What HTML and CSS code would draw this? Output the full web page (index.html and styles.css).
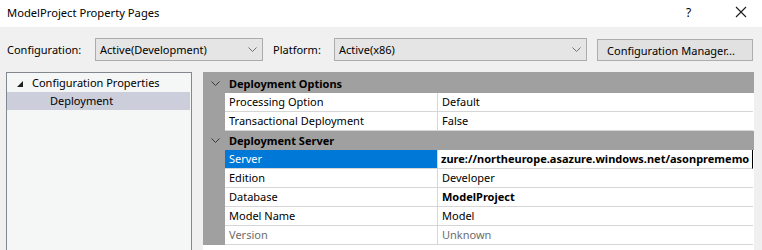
FILE: index.html
```html
<!DOCTYPE html>
<html lang="en">
<head>
    <meta charset="UTF-8">
    <title>ModelProject Property Pages</title>
    <link rel="stylesheet" href="styles.css">
</head>
<body>
    <div class="titlebar">
        <span class="title">ModelProject Property Pages</span>
        <span class="help">?</span>
        <svg class="close" width="12" height="12" viewBox="0 0 12 12">
            <path d="M1 1 L11 11 M11 1 L1 11" stroke="#1a1a1a" stroke-width="1.1" fill="none"/>
        </svg>
    </div>

    <div class="toolbar">
        <span class="label label-config">Configuration:</span>
        <div class="combo combo-config">
            <span>Active(Development)</span>
            <svg class="chev" width="9" height="5" viewBox="0 0 9 5"><path d="M0.5 0.5 L4.5 4.5 L8.5 0.5" stroke="#707070" fill="none"/></svg>
        </div>
        <span class="label label-platform">Platform:</span>
        <div class="combo combo-platform">
            <span>Active(x86)</span>
            <svg class="chev" width="9" height="5" viewBox="0 0 9 5"><path d="M0.5 0.5 L4.5 4.5 L8.5 0.5" stroke="#707070" fill="none"/></svg>
        </div>
        <div class="button">Configuration Manager...</div>
    </div>

    <div class="main">
        <div class="tree">
            <div class="tree-item">
                <svg class="expander" width="6" height="6" viewBox="0 0 6 6"><path d="M0 6 L6 6 L6 0 Z" fill="#1e1e1e"/></svg>
                <span>Configuration Properties</span>
            </div>
            <div class="tree-item child selected">Deployment</div>
        </div>

        <div class="grid">
            <div class="category">
                <svg class="cat-chev" width="9" height="5" viewBox="0 0 9 5"><path d="M0.5 0.5 L4.5 4.5 L8.5 0.5" stroke="#3a3a3a" fill="none"/></svg>
                <span>Deployment Options</span>
            </div>
            <div class="prop">
                <div class="name">Processing Option</div>
                <div class="value">Default</div>
            </div>
            <div class="prop">
                <div class="name">Transactional Deployment</div>
                <div class="value">False</div>
            </div>
            <div class="category">
                <svg class="cat-chev" width="9" height="5" viewBox="0 0 9 5"><path d="M0.5 0.5 L4.5 4.5 L8.5 0.5" stroke="#3a3a3a" fill="none"/></svg>
                <span>Deployment Server</span>
            </div>
            <div class="prop">
                <div class="name active">Server</div>
                <div class="value editing bold">zure://northeurope.asazure.windows.net/asonprememo</div>
            </div>
            <div class="prop">
                <div class="name">Edition</div>
                <div class="value">Developer</div>
            </div>
            <div class="prop">
                <div class="name">Database</div>
                <div class="value bold">ModelProject</div>
            </div>
            <div class="prop">
                <div class="name">Model Name</div>
                <div class="value">Model</div>
            </div>
            <div class="prop">
                <div class="name disabled">Version</div>
                <div class="value disabled">Unknown</div>
            </div>
        </div>
    </div>
</body>
</html>
```

FILE: styles.css
```css
body {
    margin: 0;
    width: 762px;
    height: 250px;
    overflow: hidden;
    background: #f0f0f0;
    font-family: "Segoe UI", "Noto Sans", sans-serif;
    font-size: 11px;
    color: #000;
}
.titlebar {
    height: 27px;
    background: #fff;
    display: flex;
    align-items: center;
    padding-left: 7px;
}
.title {
    flex: 1;
    margin-top: -3px;
    font-size: 11.2px;
}
.help {
    width: 12px;
    margin-right: 37px;
    margin-top: -3px;
    font-size: 12px;
}
.close {
    margin-right: 15px;
    margin-top: -4px;
}
.toolbar {
    height: 45px;
    display: flex;
    align-items: flex-start;
    padding-top: 11px;
    padding-left: 7px;
    box-sizing: border-box;
}
.label {
    line-height: 23px;
}
.label-config {
    width: 88px;
}
.label-platform {
    width: 61px;
    margin-left: 10px;
}
.combo {
    height: 23px;
    box-sizing: border-box;
    border: 1px solid #acacac;
    background: #e5e5e5;
    display: flex;
    align-items: center;
    padding-left: 4px;
    padding-right: 5px;
}
.combo span {
    flex: 1;
}
.combo-config {
    width: 168px;
}
.combo-platform {
    width: 253px;
}
.button {
    margin-left: 10px;
    margin-top: 1px;
    width: 156px;
    height: 22px;
    box-sizing: border-box;
    border: 1px solid #adadad;
    background: #e1e1e1;
    display: flex;
    align-items: center;
    justify-content: center;
    padding-right: 8px;
}
.main {
    display: flex;
    padding-left: 6px;
    height: 190px;
}
.tree {
    width: 186px;
    box-sizing: border-box;
    border: 1px solid #828790;
    background: #f5f6f6;
    padding-top: 1px;
}
.tree-item {
    height: 18px;
    line-height: 18px;
    display: flex;
    align-items: center;
    padding-left: 10px;
}
.expander {
    margin-right: 9px;
    margin-top: 1px;
}
.tree-item.child {
    padding-left: 43px;
    margin-right: 1px;
}
.selected {
    background: #cccedb;
}
.grid {
    width: 551px;
    margin-left: 11px;
    background: #fff;
    padding-top: 2px;
    box-sizing: border-box;
    border-top: 0;
    position: relative;
}
.grid::before {
    content: "";
    position: absolute;
    top: 0;
    left: 0;
    right: 0;
    height: 2px;
    background: #a0a0a0;
}
.category {
    height: 19px;
    background: #a0a0a0;
    display: flex;
    align-items: center;
    font-weight: bold;
}
.cat-chev {
    margin-left: 8px;
    margin-right: 9px;
}
.prop {
    display: flex;
    height: 19px;
    padding-left: 22px;
    background: linear-gradient(to right, #a0a0a0 22px, transparent 22px);
    box-sizing: border-box;
    margin-right: 1px;
}
.name {
    width: 213px;
    padding-left: 4px;
    line-height: 18px;
    border-right: 1px solid #d6d6d6;
    border-bottom: 1px solid #d6d6d6;
    box-sizing: border-box;
    white-space: nowrap;
    background: #fff;
}
.value {
    flex: 1;
    padding-left: 4px;
    line-height: 18px;
    white-space: nowrap;
    overflow: hidden;
    border-bottom: 1px solid #d6d6d6;
    background: #fff;
}
.name.active {
    background: #0078d7;
    color: #fff;
}
.editing {
    border-right: 1px solid #000;
    padding-left: 3px;
}
.bold {
    font-weight: bold;
}
.disabled {
    color: #6d6d6d;
}
```
